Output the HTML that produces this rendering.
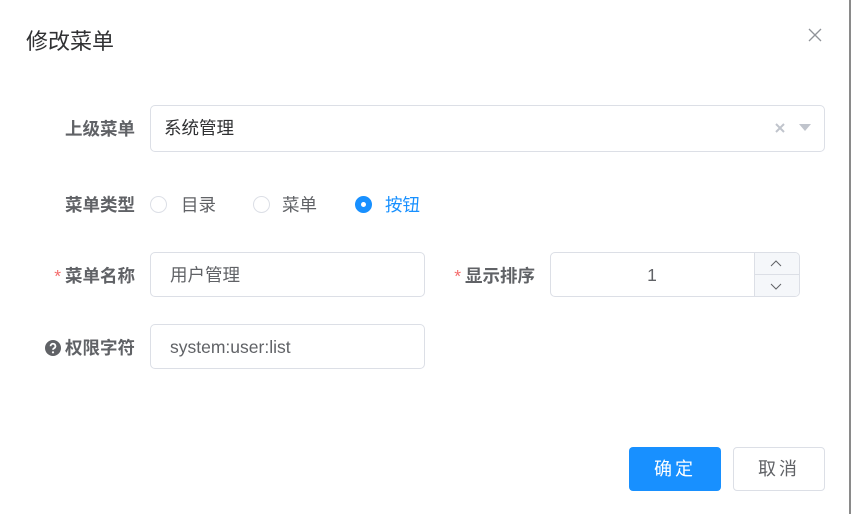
<!DOCTYPE html>
<html><head><meta charset="utf-8"><style>
*{box-sizing:border-box;margin:0;padding:0}
body{width:851px;height:514px;background:#fff;position:relative;overflow:hidden;font-family:"Liberation Sans","Noto Sans CJK SC",sans-serif;color:#606266}
.a{position:absolute}
.title{left:26px;top:27px;font-size:22px;color:#303133;line-height:30px}
.lbl{font-size:17.5px;font-weight:bold;color:#606266;text-align:right;width:140px;left:-5px;line-height:22px}
.star{color:#f56c6c;margin-right:4px;font-weight:normal}
.inp{border:1px solid #dcdfe6;border-radius:5px;font-size:17.5px;color:#606266;line-height:45px}
.radio{width:17px;height:17px;border:1px solid #dcdfe6;border-radius:50%}
.rt{font-size:17.5px;line-height:22px}
</style></head><body>
<div class="a" style="right:0;top:0;width:2px;height:514px;background:#8a8a8a"></div>
<div class="a title">修改菜单</div>
<svg class="a" style="left:808px;top:28px" width="14" height="14" viewBox="0 0 14 14"><path d="M1 1L13 13M13 1L1 13" stroke="#909399" stroke-width="1.3"/></svg>

<div class="a lbl" style="top:118px">上级菜单</div>
<div class="a inp" style="left:150px;top:105px;width:675px;height:47px;padding-left:13px;color:#303133">系统管理</div>
<svg class="a" style="left:775px;top:123px" width="10" height="10" viewBox="0 0 10 10"><path d="M1 1L9 9M9 1L1 9" stroke="#c0c4cc" stroke-width="2"/></svg>
<svg class="a" style="left:799px;top:124px" width="12" height="8" viewBox="0 0 12 8"><path d="M0 0H12L6 7Z" fill="#c0c4cc"/></svg>

<div class="a lbl" style="top:194px">菜单类型</div>
<div class="a radio" style="left:150px;top:196px"></div>
<div class="a rt" style="left:181px;top:194px">目录</div>
<div class="a radio" style="left:253px;top:196px"></div>
<div class="a rt" style="left:282px;top:194px">菜单</div>
<div class="a radio" style="left:355px;top:196px;background:#1890ff;border-color:#1890ff"></div>
<div class="a" style="left:361px;top:202px;width:5px;height:5px;border-radius:50%;background:#fff"></div>
<div class="a rt" style="left:385px;top:194px;color:#1890ff">按钮</div>

<div class="a lbl" style="top:265px"><span class="star">*</span>菜单名称</div>
<div class="a inp" style="left:150px;top:252px;width:275px;height:45px;padding-left:19px">用户管理</div>
<div class="a lbl" style="top:265px;left:395px"><span class="star">*</span>显示排序</div>
<div class="a inp" style="left:550px;top:252px;width:250px;height:45px;text-align:center;padding-right:46px">1</div>
<div class="a" style="left:754px;top:253px;width:45px;height:43px;background:#f5f7fa;border-left:1px solid #dcdfe6;border-radius:0 4px 4px 0"></div>
<div class="a" style="left:754px;top:274px;width:45px;height:1px;background:#dcdfe6"></div>
<svg class="a" style="left:770px;top:260px" width="12" height="8" viewBox="0 0 12 8"><path d="M1 6L6 1L11 6" stroke="#606266" fill="none"/></svg>
<svg class="a" style="left:770px;top:282px" width="12" height="8" viewBox="0 0 12 8"><path d="M1 2L6 7L11 2" stroke="#606266" fill="none"/></svg>

<div class="a lbl" style="top:337px"><svg width="16" height="16" viewBox="0 0 16 16" style="vertical-align:-2px;margin-right:4px"><circle cx="8" cy="8" r="8" fill="#606266"/><path d="M5.6 6.2a2.4 2.4 0 1 1 3.4 2.1c-.7.4-1 .8-1 1.5" stroke="#fff" stroke-width="1.8" fill="none"/><circle cx="8" cy="12.3" r="1.1" fill="#fff"/></svg>权限字符</div>
<div class="a inp" style="left:150px;top:324px;width:275px;height:45px;padding-left:19px">system:user:list</div>

<div class="a" style="left:629px;top:447px;width:92px;height:44px;background:#1890ff;border-radius:4px;color:#fff;font-size:18px;line-height:44px;text-align:center;letter-spacing:3px">确定</div>
<div class="a" style="left:733px;top:447px;width:92px;height:44px;border:1px solid #dcdfe6;border-radius:4px;color:#606266;font-size:18px;line-height:42px;text-align:center;letter-spacing:3px">取消</div>
</body></html>
